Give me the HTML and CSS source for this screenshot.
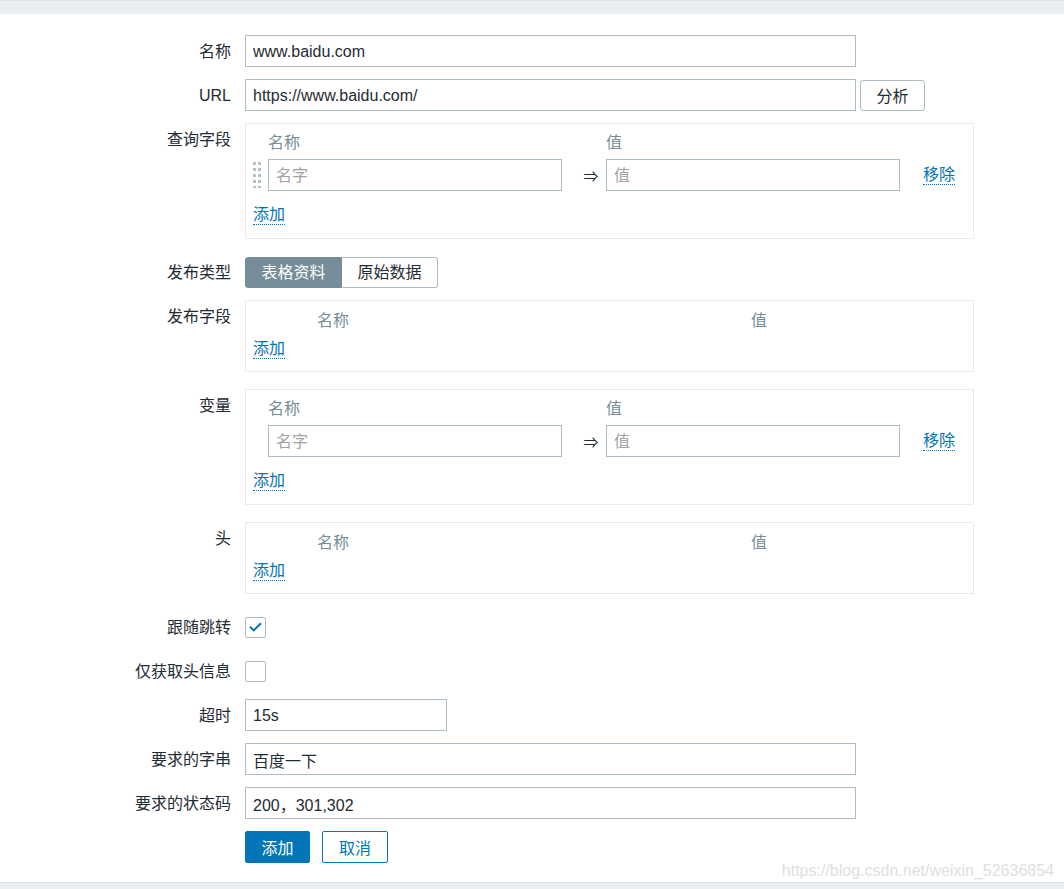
FILE: index.html
```html
<!DOCTYPE html>
<html lang="zh">
<head>
<meta charset="utf-8">
<link rel="stylesheet" href="styles.css">
</head>
<body>
<div class="topbar"></div>
<form class="form">
  <div class="row">
    <label class="lbl">名称</label>
    <div class="field"><input class="input w-wide" value="www.baidu.com"></div>
  </div>
  <div class="row">
    <label class="lbl">URL</label>
    <div class="field"><input class="input w-wide" value="https://www.baidu.com/"><button type="button" class="btn-alt">分析</button></div>
  </div>
  <div class="row row-box">
    <label class="lbl">查询字段</label>
    <div class="field">
      <div class="box">
        <div class="pairs">
          <span></span><span class="th">名称</span><span></span><span class="th">值</span><span></span>
          <span class="drag"><svg width="8" height="26" viewBox="0 0 8 26"><g fill="#b4c1c8"><rect x="0" y="0" width="3" height="3"/><rect x="5" y="0" width="3" height="3"/><rect x="0" y="6" width="3" height="3"/><rect x="5" y="6" width="3" height="3"/><rect x="0" y="12" width="3" height="3"/><rect x="5" y="12" width="3" height="3"/><rect x="0" y="18" width="3" height="3"/><rect x="5" y="18" width="3" height="3"/><rect x="0" y="24" width="3" height="3"/><rect x="5" y="24" width="3" height="3"/></g></svg></span>
          <input class="input" placeholder="名字"><span class="arrow">⇒</span><input class="input" placeholder="值"><span class="act"><a class="link">移除</a></span>
        </div>
        <div class="add"><a class="link">添加</a></div>
      </div>
    </div>
  </div>
  <div class="row">
    <label class="lbl">发布类型</label>
    <div class="field">
      <div class="seg"><span class="seg-item on">表格资料</span><span class="seg-item">原始数据</span></div>
    </div>
  </div>
  <div class="row row-box">
    <label class="lbl">发布字段</label>
    <div class="field">
      <div class="box box-empty">
        <div class="heads"><span class="th h-name">名称</span><span class="th h-val">值</span></div>
        <div class="add2"><a class="link">添加</a></div>
      </div>
    </div>
  </div>
  <div class="row row-box">
    <label class="lbl">变量</label>
    <div class="field">
      <div class="box">
        <div class="pairs">
          <span></span><span class="th">名称</span><span></span><span class="th">值</span><span></span>
          <span></span>
          <input class="input" placeholder="名字"><span class="arrow">⇒</span><input class="input" placeholder="值"><span class="act"><a class="link">移除</a></span>
        </div>
        <div class="add"><a class="link">添加</a></div>
      </div>
    </div>
  </div>
  <div class="row row-box">
    <label class="lbl">头</label>
    <div class="field">
      <div class="box box-empty">
        <div class="heads"><span class="th h-name">名称</span><span class="th h-val">值</span></div>
        <div class="add2"><a class="link">添加</a></div>
      </div>
    </div>
  </div>
  <div class="row row-check">
    <label class="lbl">跟随跳转</label>
    <div class="field"><span class="check"><svg width="13" height="10" viewBox="0 0 13 10"><path d="M1 4.8 L4.8 8.4 L12 1.3" fill="none" stroke="#0275b8" stroke-width="2"/></svg></span></div>
  </div>
  <div class="row">
    <label class="lbl">仅获取头信息</label>
    <div class="field"><span class="check"></span></div>
  </div>
  <div class="row">
    <label class="lbl">超时</label>
    <div class="field"><input class="input w-short" value="15s"></div>
  </div>
  <div class="row">
    <label class="lbl">要求的字串</label>
    <div class="field"><input class="input w-wide" value="百度一下"></div>
  </div>
  <div class="row">
    <label class="lbl">要求的状态码</label>
    <div class="field"><input class="input w-wide" value="200，301,302"></div>
  </div>
  <div class="row">
    <span class="lbl"></span>
    <div class="field buttons"><button type="button" class="btn-main">添加</button><button type="button" class="btn-out">取消</button></div>
  </div>
</form>
<div class="bottombar"></div>
<div class="watermark">https://blog.csdn.net/weixin_52636854</div>
</body>
</html>
```
FILE: styles.css
```css
html, body {
  margin: 0;
  padding: 0;
}
body {
  min-height: 100vh;
  display: flex;
  flex-direction: column;
  background: #ffffff;
  font-family: "Liberation Sans", "Noto Sans CJK SC", Arial, sans-serif;
  font-size: 16px;
  color: #1f2c33;
  position: relative;
  overflow: hidden;
}
.topbar {
  height: 13px;
  background: #ebeef0;
  border-top: 1px solid #dde2e5;
}
.bottombar {
  height: 6px;
  background: #ebeef0;
  border-top: 1px solid #dfe3e6;
}
.form {
  flex: 1;
  padding-top: 21px;
}
.row {
  display: grid;
  grid-template-columns: 231px 1fr;
  column-gap: 14px;
  margin-bottom: 12px;
}
.row-box {
  margin-bottom: 17px;
}
.lbl {
  text-align: right;
  line-height: 33px;
  height: 32px;
  white-space: nowrap;
}
.field {
  display: flex;
  align-items: center;
  min-height: 32px;
}
.input {
  box-sizing: border-box;
  height: 32px;
  border: 1px solid #acbbc4;
  background: #fff;
  padding: 1px 7px 0 7px;
  font-family: "Liberation Sans", "Noto Sans CJK SC", Arial, sans-serif;
  font-size: 16px;
  color: #1f2c33;
  border-radius: 0;
  outline: none;
  margin: 0;
}
.input::placeholder {
  color: #a3a3a3;
}
.w-wide { width: 611px; }
.w-short { width: 202px; }
.btn-alt {
  box-sizing: border-box;
  margin-left: 4px;
  width: 65px;
  height: 31px;
  border: 1px solid #acbbc4;
  border-radius: 3px;
  background: #fff;
  color: #1f2c33;
  font-family: "Liberation Sans", "Noto Sans CJK SC", Arial, sans-serif;
  font-size: 16px;
  padding: 0;
}
.box {
  box-sizing: border-box;
  width: 729px;
  border: 1px solid #ebebeb;
  padding: 10px 7px 13px 7px;
}
.pairs {
  display: grid;
  grid-template-columns: 15px 294px 44px 294px 1fr;
  row-gap: 7px;
  align-items: center;
}
.th {
  color: #768d99;
  line-height: 18px;
}
.drag {
  display: flex;
  align-items: center;
  height: 32px;
}
.drag svg { display: block; }
.arrow {
  text-align: center;
  padding-left: 14px;
  font-size: 15px;
  color: #1f2c33;
}
.act {
  padding-left: 23px;
}
.link {
  color: #0275b8;
  border-bottom: 1px dotted #0275b8;
  line-height: 18px;
  display: inline-block;
  cursor: pointer;
}
.add {
  margin-top: 15px;
  line-height: 18px;
  display: flex;
}
.box-empty {
  padding: 11px 7px 12px 7px;
}
.heads {
  display: flex;
  line-height: 18px;
}
.h-name { margin-left: 64px; }
.h-val { margin-left: 402px; }
.add2 {
  margin-top: 10px;
  display: flex;
}
.seg {
  display: flex;
  height: 31px;
  margin-top: 1px;
}
.seg-item {
  box-sizing: border-box;
  height: 31px;
  line-height: 29px;
  border: 1px solid #acbbc4;
  padding: 0 15px;
  width: 97px;
  text-align: center;
  color: #1f2c33;
}
.seg-item:first-child {
  border-radius: 3px 0 0 3px;
}
.seg-item:last-child {
  border-left: none;
  border-radius: 0 3px 3px 0;
  width: 96px;
}
.seg-item.on {
  background: #768d99;
  border-color: #768d99;
  color: #fff;
}
.check {
  box-sizing: border-box;
  width: 21px;
  height: 21px;
  border: 1px solid #acbbc4;
  border-radius: 2px;
  display: flex;
  align-items: center;
  justify-content: center;
}
.check svg { display: block; }
.buttons {
  gap: 12px;
}
.btn-main, .btn-out {
  box-sizing: border-box;
  height: 32px;
  border-radius: 2px;
  font-family: "Liberation Sans", "Noto Sans CJK SC", Arial, sans-serif;
  font-size: 16px;
  padding: 0;
}
.btn-main {
  width: 65px;
  background: #0275b8;
  border: 1px solid #0275b8;
  color: #fff;
}
.btn-out {
  width: 66px;
  background: #fff;
  border: 1px solid #0275b8;
  color: #0275b8;
}
.watermark {
  position: absolute;
  right: 10px;
  bottom: 9px;
  color: #e0e0e0;
  font-size: 16px;
  font-family: "Liberation Sans", Arial, sans-serif;
}
```
